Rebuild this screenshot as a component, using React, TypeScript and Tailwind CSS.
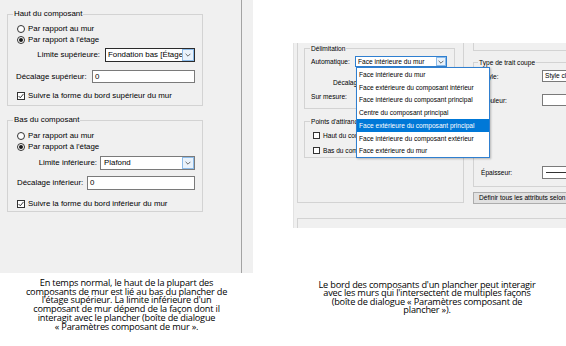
import React from "react";

const Chev = () => (
  <svg width="6" height="4" viewBox="0 0 6 4">
    <path d="M0.6 0.8 L3 3.2 L5.4 0.8" fill="none" stroke="#5a5a5a" strokeWidth="0.9" />
  </svg>
);

function Radio({ checked = false }: { checked?: boolean }) {
  return (
    <span className="flex h-[8px] w-[8px] shrink-0 items-center justify-center rounded-full border border-[#333333] bg-white">
      {checked && <span className="h-[4px] w-[4px] rounded-full bg-[#1a1a1a]" />}
    </span>
  );
}

function CheckBox({ checked = false }: { checked?: boolean }) {
  return (
    <span className="flex h-[8px] w-[8px] shrink-0 items-center justify-center border border-[#333333] bg-white">
      {checked && (
        <svg width="6" height="6" viewBox="0 0 6 6">
          <path d="M0.6 3 L2.3 4.8 L5.5 0.9" fill="none" stroke="#222" strokeWidth="0.9" />
        </svg>
      )}
    </span>
  );
}

function SmallBox() {
  return <span className="h-[7px] w-[7px] shrink-0 border border-[#333333] bg-white" />;
}

function LeftShot() {
  return (
    <div className="flex h-[273px] w-[253px] shrink-0 bg-[#f0f0f0] text-[7.9px] leading-[10px]">
      <div className="flex h-full w-[242px] flex-col border-r border-[#a3a3a3] pl-[7px] pt-[14px]">
        {/* Haut du composant */}
        <div className="relative flex h-[92px] w-[196px] flex-col border border-[#d3d3d3]">
          <span className="absolute -top-[6px] left-[5px] bg-[#f0f0f0] px-[1px]">Haut du composant</span>
          <div className="mt-[8px] flex h-[11px] items-center gap-[3px] pl-[9px]">
            <Radio />
            <span>Par rapport au mur</span>
          </div>
          <div className="flex h-[11px] items-center gap-[3px] pl-[9px]">
            <Radio checked />
            <span>Par rapport à l'étage</span>
          </div>
          <div className="mt-[3px] flex h-[14px] items-center">
            <span className="w-[92px] text-right">Limite supérieure:</span>
            <div className="ml-[5px] flex h-[14px] w-[90px] border border-[#2b2b2b] bg-white">
              <span className="flex-1 overflow-hidden whitespace-nowrap pl-[2px] leading-[12px]">Fondation bas [Étage</span>
              <span className="flex w-[12px] items-center justify-center border border-[#8cbbe9] bg-[#e9f2fb]">
                <Chev />
              </span>
            </div>
          </div>
          <div className="mt-[8px] flex h-[13px] items-center pl-[8px]">
            <span className="w-[76px] whitespace-nowrap">Décalage supérieur:</span>
            <div className="h-[13px] w-[103px] border border-[#7a7a7a] bg-white pl-[2px] leading-[11px]">0</div>
          </div>
          <div className="mt-[7px] flex h-[11px] items-center gap-[3px] pl-[9px]">
            <CheckBox checked />
            <span className="whitespace-nowrap">Suivre la forme du bord supérieur du mur</span>
          </div>
        </div>

        {/* Bas du composant */}
        <div className="relative mt-[14px] flex h-[92px] w-[196px] flex-col border border-[#d3d3d3]">
          <span className="absolute -top-[6px] left-[5px] bg-[#f0f0f0] px-[1px]">Bas du composant</span>
          <div className="mt-[9px] flex h-[11px] items-center gap-[3px] pl-[9px]">
            <Radio />
            <span>Par rapport au mur</span>
          </div>
          <div className="flex h-[11px] items-center gap-[3px] pl-[9px]">
            <Radio checked />
            <span>Par rapport à l'étage</span>
          </div>
          <div className="mt-[4px] flex h-[14px] items-center">
            <span className="w-[89px] text-right">Limite inférieure:</span>
            <div className="ml-[3px] flex h-[14px] w-[95px] border border-[#7a7a7a] bg-white">
              <span className="flex-1 overflow-hidden whitespace-nowrap pl-[3px] leading-[12px]">Plafond</span>
              <span className="flex w-[12px] items-center justify-center border border-[#8cbbe9] bg-[#e9f2fb]">
                <Chev />
              </span>
            </div>
          </div>
          <div className="mt-[6px] flex h-[14px] items-center pl-[9px]">
            <span className="w-[70px] whitespace-nowrap">Décalage inférieur:</span>
            <div className="h-[14px] w-[108px] border border-[#7a7a7a] bg-white pl-[2px] leading-[12px]">0</div>
          </div>
          <div className="mt-[8px] flex h-[11px] items-center gap-[3px] pl-[9px]">
            <CheckBox checked />
            <span className="whitespace-nowrap">Suivre la forme du bord inférieur du mur</span>
          </div>
        </div>
      </div>
    </div>
  );
}

const items = [
  "Face intérieure du mur",
  "Face extérieure du composant intérieur",
  "Face intérieure du composant principal",
  "Centre du composant principal",
  "Face extérieure du composant principal",
  "Face intérieure du composant extérieur",
  "Face extérieure du mur",
];

function RightShot() {
  return (
    <div className="relative ml-[40px] mt-[43px] h-[185px] w-[273px] shrink-0 overflow-hidden border-l border-[#e2e2e2] bg-[#f0f0f0] text-[6.6px] leading-[9px]">
      <div className="flex items-start">
        {/* left outer box */}
        <div className="ml-[3px] flex h-[160px] w-[167px] shrink-0 flex-col border-x border-b border-[#d3d3d3]">
          <div className="relative ml-[6px] mt-[5px] flex h-[61px] w-[151px] flex-col border border-[#d3d3d3]">
            <span className="absolute -top-[5px] left-[5px] bg-[#f0f0f0] px-[1px]">Délimitation</span>
            <div className="mt-[7px] flex h-[11px] items-center pl-[6px]">
              <span className="w-[44px] whitespace-nowrap">Automatique:</span>
              <div className="flex h-[11px] w-[92px] border border-[#2f7fd0] bg-white">
                <span className="flex-1 overflow-hidden whitespace-nowrap pl-[2px] leading-[9px]">Face intérieure du mur</span>
                <span className="flex w-[10px] items-center justify-center border border-[#8cbbe9] bg-[#e9f2fb]">
                  <Chev />
                </span>
              </div>
            </div>
            <div className="mt-[10px] flex h-[10px] items-center pl-[28px]">
              <span className="whitespace-nowrap">Décalage :</span>
            </div>
            <div className="mt-[4px] flex h-[10px] items-center pl-[6px]">
              <span className="whitespace-nowrap">Sur mesure:</span>
            </div>
          </div>
          <div className="relative ml-[6px] mt-[12px] flex h-[37px] w-[151px] flex-col border border-[#d3d3d3]">
            <span className="absolute -top-[5px] left-[5px] whitespace-nowrap bg-[#f0f0f0] px-[1px]">Points d'attirance</span>
            <div className="mt-[8px] flex h-[10px] items-center gap-[3px] pl-[8px]">
              <SmallBox />
              <span className="whitespace-nowrap">Haut du composant</span>
            </div>
            <div className="mt-[5px] flex h-[10px] items-center gap-[3px] pl-[8px]">
              <SmallBox />
              <span className="whitespace-nowrap">Bas du composant</span>
            </div>
          </div>
        </div>

        {/* right column */}
        <div className="ml-[9px] flex w-[120px] shrink-0 flex-col">
          <div className="h-[8px] border-b border-l border-[#d3d3d3]" />
          <div className="relative mt-[11px] flex h-[125px] flex-col border border-[#d3d3d3]">
            <span className="absolute -top-[5px] left-[4px] whitespace-nowrap bg-[#f0f0f0] px-[1px]">Type de trait coupe</span>
            <div className="mt-[7px] flex h-[12px] items-center pl-[8px]">
              <span className="w-[60px]">Style:</span>
              <div className="h-[12px] w-[50px] whitespace-nowrap border border-[#7a7a7a] bg-white pl-[2px] leading-[10px]">Style classe</div>
            </div>
            <div className="mt-[12px] flex h-[12px] items-center pl-[8px]">
              <span className="w-[60px]">Couleur:</span>
              <div className="h-[12px] w-[50px] border border-[#7a7a7a] bg-white" />
            </div>
            <div className="mt-[60px] flex h-[13px] items-center pl-[7px]">
              <span className="w-[61px]">Épaisseur:</span>
              <div className="flex h-[13px] w-[50px] items-center border border-[#7a7a7a] bg-white pl-[3px]">
                <span className="h-[1px] w-[40px] bg-[#333]" />
              </div>
            </div>
          </div>
          <div className="mt-[5px] h-[12px] w-[120px] whitespace-nowrap border border-[#adadad] bg-[#e1e1e1] pl-[5px] leading-[10px]">
            Définir tous les attributs selon la classe
          </div>
        </div>
      </div>
      <div className="ml-[3px] mt-[14px] h-[20px] border-l border-t border-[#d3d3d3]" />

      {/* open dropdown list */}
      <div className="absolute left-[62px] top-[24px] w-[134px] border border-[#2f7fd0] bg-white py-0 shadow-[1px_1px_2px_rgba(0,0,0,0.25)]">
        {items.map((t, i) => (
          <div
            key={t}
            className={
              i === 4
                ? "flex h-[12.75px] items-center whitespace-nowrap bg-[#0078d7] pl-[2px] text-white"
                : "flex h-[12.75px] items-center whitespace-nowrap pl-[2px]"
            }
          >
            {t}
          </div>
        ))}
      </div>
    </div>
  );
}

export default function App() {
  return (
    <div className="h-[346px] w-[566px] overflow-hidden bg-white font-['Liberation_Sans',Arial,sans-serif] text-black">
      <div className="flex h-[273px] items-start">
        <LeftShot />
        <RightShot />
      </div>
      <div className="flex items-start text-center font-['Open_Sans',sans-serif] text-[9.2px] tracking-[-0.2px] text-black">
        <p className="mt-[6px] w-[253px] whitespace-nowrap leading-[8.7px]">
          En temps normal, le haut de la plupart des
          <br />
          composants de mur est lié au bas du plancher de
          <br />
          l'étage supérieur. La limite inférieure d'un
          <br />
          composant de mur dépend de la façon dont il
          <br />
          interagit avec le plancher (boîte de dialogue
          <br />
          « Paramètres composant de mur ».
        </p>
        <p className="ml-[37px] mt-[8px] w-[274px] whitespace-nowrap leading-[8.4px]">
          Le bord des composants d'un plancher peut interagir
          <br />
          avec les murs qui l'intersectent de multiples façons
          <br />
          (boîte de dialogue « Paramètres composant de
          <br />
          plancher »).
        </p>
      </div>
    </div>
  );
}
